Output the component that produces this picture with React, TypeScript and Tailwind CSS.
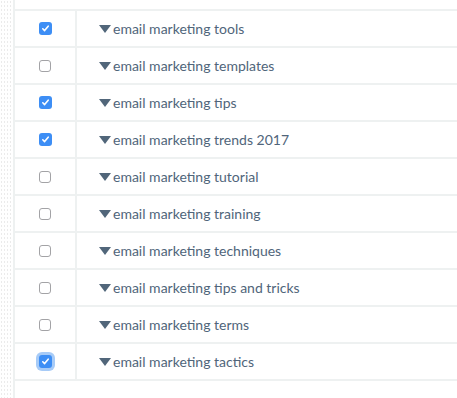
import React from "react";

const rows = [
  { label: "email marketing tools", checked: true },
  { label: "email marketing templates", checked: false },
  { label: "email marketing tips", checked: true },
  { label: "email marketing trends 2017", checked: true },
  { label: "email marketing tutorial", checked: false },
  { label: "email marketing training", checked: false },
  { label: "email marketing techniques", checked: false },
  { label: "email marketing tips and tricks", checked: false },
  { label: "email marketing terms", checked: false },
  { label: "email marketing tactics", checked: true, focused: true },
];

const Box = ({ checked, focused }: { checked: boolean; focused?: boolean }) => {
  if (checked) {
    return (
      <span
        className={
          "flex items-center justify-center w-[13px] h-[13px] rounded-[3px] bg-[#3d8ef5] " +
          (focused ? "ring-[3px] ring-[#a7cbf7]" : "")
        }
      >
        <svg width="9" height="9" viewBox="0 0 9 9">
          <path d="M1.8 4.8 L3.6 6.6 L7.2 2.2" fill="none" stroke="white" strokeWidth="1.6" strokeLinecap="round" strokeLinejoin="round" />
        </svg>
      </span>
    );
  }
  return <span className="block w-[12px] h-[12px] rounded-[3px] border border-[#a3a3a6] bg-white" />;
};

export default function App() {
  return (
    <div className="flex w-[457px] h-[398px] bg-white font-['Lato','Liberation_Sans',sans-serif] overflow-hidden">
      <div className="w-[13px] shrink-0 bg-[radial-gradient(#ebebeb_0.7px,transparent_0.8px)] bg-[length:3px_4px]" />
      <div className="flex-1 border-l-2 border-[#eef1f1]">
        <div className="h-[11px] border-b-2 border-[#eef1f1]" />
        {rows.map((r) => (
          <div key={r.label} className="flex h-[37px] border-b-2 border-[#eef1f1]">
            <div className="w-[62px] flex items-center justify-center border-r-2 border-[#eef1f1]">
              <Box checked={r.checked} focused={r.focused} />
            </div>
            <div className="flex items-center pl-[22px] text-[14px] text-[#50657a]">
              <svg width="12" height="8" viewBox="0 0 12 8" className="mr-[2px] mt-[1px]">
                <path d="M0 0 H12 L6 8 Z" fill="#51667a" />
              </svg>
              <span>{r.label}</span>
            </div>
          </div>
        ))}
      </div>
    </div>
  );
}
